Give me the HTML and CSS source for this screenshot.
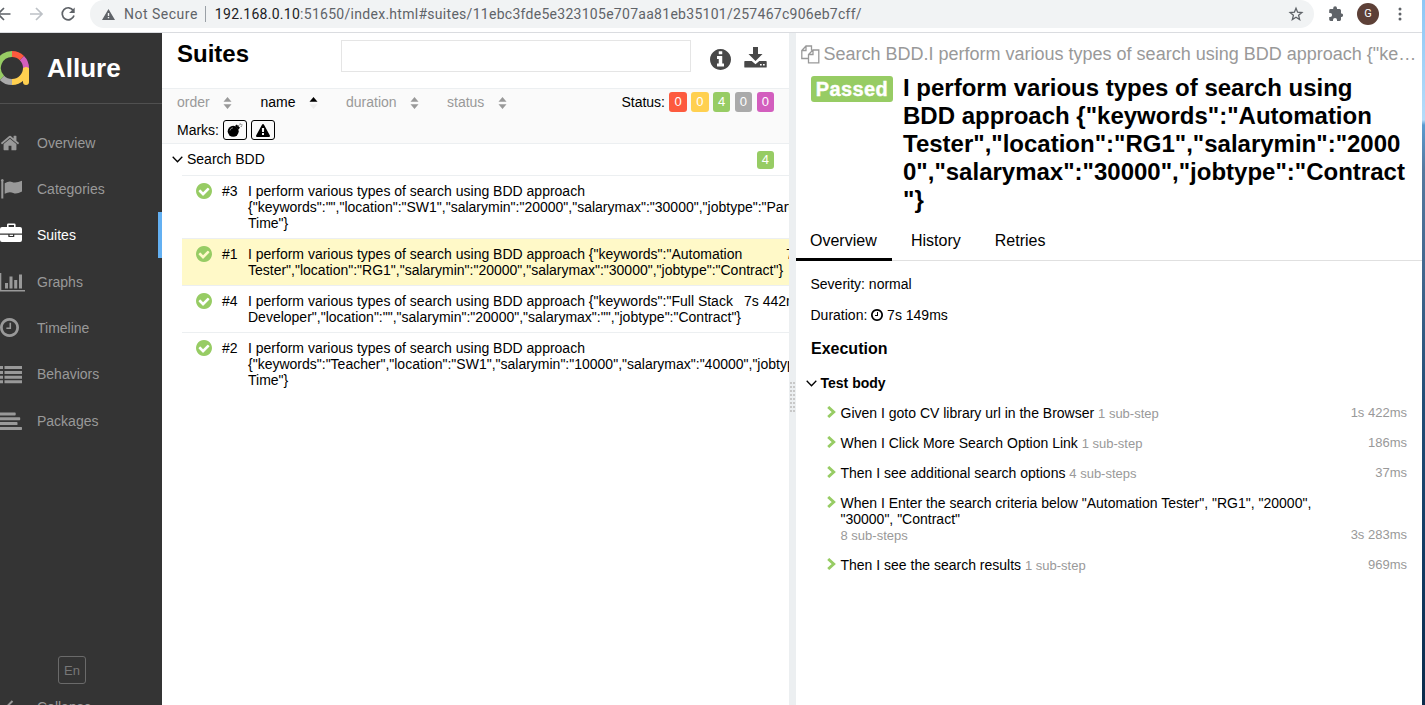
FILE: index.html
```html
<!DOCTYPE html>
<html lang="en">
<head>
<meta charset="utf-8">
<title>Allure Report</title>
<link rel="stylesheet" href="styles.css">
</head>
<body>
<svg width="0" height="0" class="defs">
  <symbol id="check" viewBox="128 128 1536 1536"><path d="M1412 734q0-28-18-46l-91-90q-19-19-45-19t-45 19l-408 407-226-226q-19-19-45-19t-45 19l-91 90q-18 18-18 46 0 27 18 45l362 362q19 19 45 19 27 0 46-19l543-543q18-18 18-45zm252 162q0 209-103 385.500t-279.500 279.500-385.500 103-385.500-103-279.500-279.500-103-385.500 103-385.500 279.500-279.500 385.500-103 385.500 103 279.500 279.500 103 385.500z"/></symbol>
  <symbol id="clock" viewBox="128 128 1536 1536"><path d="M1024 544v448q0 14-9 23t-23 9h-320q-14 0-23-9t-9-23v-64q0-14 9-23t23-9h224v-352q0-14 9-23t23-9h64q14 0 23 9t9 23zm416 352q0-148-73-273t-198-198-273-73-273 73-198 198-73 273 73 273 198 198 273 73 273-73 198-198 73-273zm224 0q0 209-103 385.500t-279.500 279.500-385.500 103-385.500-103-279.500-279.500-103-385.500 103-385.500 279.500-279.500 385.500-103 385.500 103 279.500 279.500 103 385.500z"/></symbol>
  <symbol id="sort" viewBox="0 0 8 12"><path d="M4 0 8 4.800H0zM0 7.200h8L4 12z"/></symbol>
  <symbol id="down" viewBox="0 0 11 7"><path d="M.700.700 5.500 5.700 10.300.700" fill="none" stroke="currentColor" stroke-width="1.300"/></symbol>
  <symbol id="right" viewBox="0 0 9 12"><path d="M1.200 1 6.700 6l-5.500 5" fill="none" stroke="currentColor" stroke-width="2.900"/></symbol>
</svg>
<div class="browser">
  <svg class="nav-icons" width="90" height="28" viewBox="0 0 90 28" fill="none" stroke-width="1.700">
    <path stroke="#5f6368" d="M-2 14H10.500M4 8l-6 6 6 6"/>
    <path stroke="#bdc1c6" d="M30 14H41.500M36 8l6 6-6 6"/>
    <path stroke="#5f6368" d="M73.300 10.500A6 6 0 1 0 74 15.500"/><path fill="#5f6368" d="M74.700 7.500v5.600h-5.600z"/>
  </svg>
  <div class="omnibox">
    <svg width="13" height="11" viewBox="0 0 13 11"><path fill="#5f6368" fill-rule="evenodd" d="M6.500 0 13 11H0zM5.800 4v3h1.400V4zm0 4v1.300h1.400V8z"/></svg>
    <span class="insecure">Not Secure</span><span class="bar"></span>
    <span class="url"><b>192.168.0.10</b>:51650/index.html#suites/11ebc3fde5e323105e707aa81eb35101/257467c906eb7cff/</span>
    <svg class="star" width="14" height="14" viewBox="0 0 14 14"><path fill="none" stroke="#5f6368" stroke-width="1.300" d="M7 1.200l1.600 4 4.300.3-3.300 2.800 1.050 4.200L7 10.200l-3.650 2.300L4.400 8.300 1.100 5.500l4.300-.3z"/></svg>
  </div>
  <svg class="puzzle" width="16" height="16" viewBox="0 0 16 16"><path fill="#5f6368" d="M13 7.500V4.500Q13 3 11.600 3H9V2.200a1.900 1.900 0 0 0-3.800 0V3H2.500Q1.200 3 1.200 4.400V7H2.100a2 2 0 0 1 0 4H1.200v2.600Q1.200 15 2.600 15H5v-.9a2 2 0 0 1 4 0v.9h2.600Q13 15 13 13.600V11h.7a1.800 1.800 0 0 0 0-3.500z"/></svg>
  <span class="avatar">G</span>
  <svg class="dots" width="4" height="14" viewBox="0 0 4 14" fill="#5f6368"><circle cx="2" cy="2" r="1.500"/><circle cx="2" cy="7" r="1.500"/><circle cx="2" cy="12" r="1.500"/></svg>
</div>
<div class="app">
  <nav class="side">
    <div class="brand">
      <svg width="30" height="36" viewBox="0 0 30 36" fill="none" stroke-width="6">
        <path stroke="#97cc64" d="M12 4A14 14 0 0 0 2 27.900"/>
        <path stroke="#fd5a3e" d="M12 4A14 14 0 0 1 21.900 8.100"/>
        <path stroke="#d35ebe" d="M21.900 8.100A14 14 0 0 1 26 18"/>
        <path stroke="#aaa" d="M2 27.900A14 14 0 0 0 12 32"/>
        <path stroke="#ffd050" d="M12 32A14 14 0 0 0 26 18"/><path stroke="#ffd050" stroke-linecap="round" d="M26 20V32"/><path stroke="#ffd050" d="M26 18v6"/>
      </svg><span>Allure</span>
    </div>
    <ul class="menu">
      <li><svg width="20" height="20" viewBox="0 0 1792 1792"><path d="M1472 992v480q0 26-19 45t-45 19h-384v-384h-256v384h-384q-26 0-45-19t-19-45v-480q0-1 .5-3t.5-3l575-474 575 474q1 2 1 6zm223-69l-62 74q-8 9-21 11h-3q-13 0-21-7l-692-577-692 577q-12 8-24 7-13-2-21-11l-62-74q-8-10-7-23.500t11-21.500l719-599q32-26 76-26t76 26l244 204v-195q0-14 9-23t23-9h192q14 0 23 9t9 23v408l219 182q10 8 11 21.500t-7 23.500z"/></svg>Overview</li>
      <li><svg width="23" height="20" viewBox="0 0 23 20"><path d="M1.300 2.500a1.400 1.400 0 1 1 2 0V19.500H1.300zM4.700 4.300Q9 1.600 12 2.900 15.500 4.500 22 1.800V12.400Q16.500 15.600 13.300 14 9.500 12 4.700 14.700z"/></svg>Categories</li>
      <li class="on"><svg width="23" height="20" viewBox="0 0 23 20"><path fill-rule="evenodd" d="M7 4V1.800Q7 .5 8.300.5h6Q15.600.5 15.600 1.800V4H20Q22 4 22 6v4.500H0V6Q0 4 2 4zM8.600 4h5.400V2H8.600zM0 11.700h8.300v1.700q0 .7.700.7h4.600q.7 0 .7-.7v-1.700H22v5.400q0 2-2 2H2q-2 0-2-2zM9.600 11.700h3.400v1.200H9.600z"/></svg>Suites</li>
      <li><svg width="26" height="20" viewBox="0 0 26 20"><path d="M0 1h1.300v17H25v1.500H0zM5 11h3v5.500H5zM9.500 4.500h3v12h-3zM14.200 8h3v8.500h-3zM19 2.500h3v14h-3z"/></svg>Graphs</li>
      <li><svg width="19" height="19"><use href="#clock"/></svg>Timeline</li>
      <li><svg width="23" height="20" viewBox="0 0 23 20"><path d="M0 2h3v3H0zM4.500 2H22v3H4.500zM0 7h3v3H0zM4.500 7H22v3H4.500zM0 11.700h3v3H0zM4.500 11.700H22v3H4.500zM0 16.300h3v3H0zM4.500 16.300H22v3H4.500z"/></svg>Behaviors</li>
      <li><svg width="23" height="20" viewBox="0 0 23 20"><path d="M0 1.500h15q.7 0 .7.700v1.600q0 .7-.7.700H0zM0 6.300h19.500q.7 0 .7.700v1.600q0 .7-.7.700H0zM0 11.100h16.800q.7 0 .7.700v1.600q0 .7-.7.700H0zM0 15.900h21.300q.7 0 .7.700v1.600q0 .7-.7.700H0z"/></svg>Packages</li>
    </ul>
    <div class="lang">En</div>
    <div class="collapse"><svg width="14" height="14" viewBox="0 0 14 14"><path d="M12.500 1 6.500 7l6 6" fill="none" stroke="#999" stroke-width="2"/></svg>Collapse</div>
  </nav>
  <section class="tree">
    <header>
      <h1>Suites</h1><div class="search"></div>
      <svg class="info" width="21" height="21" viewBox="128 128 1536 1536"><path d="M1152 1376v-160q0-14-9-23t-23-9h-96v-512q0-14-9-23t-23-9h-320q-14 0-23 9t-9 23v160q0 14 9 23t23 9h96v320h-96q-14 0-23 9t-9 23v160q0 14 9 23t23 9h448q14 0 23-9t9-23zm-128-896v-160q0-14-9-23t-23-9h-192q-14 0-23 9t-9 23v160q0 14 9 23t23 9h192q14 0 23-9t9-23zm640 416q0 209-103 385.500t-279.500 279.500-385.500 103-385.500-103-279.500-279.500-103-385.500 103-385.500 279.500-279.500 385.500-103 385.500 103 279.500 279.500 103 385.500z"/></svg>
      <svg class="save" width="23" height="21" viewBox="0 0 23 21"><path fill-rule="evenodd" d="M9 0h5v7h4.500l-7 7-7-7H9zM1 14h6.700l3.800 3.300 3.800-3.300H22q.7 0 .7.700v5.200q0 .7-.7.700H1q-.7 0-.7-.7v-5.200q0-.7.700-.7zM16 17v1.600h1.700V17zM19 17v1.600h1.700V17z"/></svg>
    </header>
    <div class="filters">
      <div class="sorts">
        <span class="s1">order<svg width="9" height="12"><use href="#sort"/></svg></span>
        <span class="s2">name<svg width="9" height="12" viewBox="0 0 8 12"><path d="M4 0 8 4.800H0z"/><path fill="#ccc" d="M0 7.200h8L4 12z" opacity=".25"/></svg></span>
        <span class="s3">duration<svg width="9" height="12"><use href="#sort"/></svg></span>
        <span class="s4">status<svg width="9" height="12"><use href="#sort"/></svg></span>
        <div class="status">Status:<i class="red">0</i><i class="yel">0</i><i class="grn">4</i><i class="gry">0</i><i class="pur">0</i></div>
      </div>
      <div class="marks">Marks:
        <span><svg width="16" height="14" viewBox="0 0 16 14"><circle cx="6.200" cy="8.300" r="5.500"/><path d="M8 3l1.700-1.600 3.300 3.300L11.400 6.500z"/><path d="M10.800 3.500l1.800-1.800M13.200.3v1.500M14 1.900h1.500M13.700 3l1 1" stroke="#555" stroke-width=".8"/><path d="M3 7.500Q3.500 5 6 4.800" stroke="#999" stroke-width=".8" fill="none"/></svg></span>
        <span><svg width="14" height="13" viewBox="0 0 1792 1664"><path d="M1024 1375v-190q0-14-9.500-23.500t-22.500-9.500h-192q-13 0-22.500 9.500t-9.500 23.500v190q0 14 9.500 23.500t22.500 9.500h192q13 0 22.500-9.500t9.500-23.500zm-2-374l18-459q0-12-10-19-13-11-24-11h-220q-11 0-24 11-10 7-10 21l17 457q0 10 10 16.500t24 6.500h185q14 0 23.500-6.500t10.500-16.500zm-14-934l768 1408q35 63-2 126-17 29-46.500 46t-63.500 17h-1536q-34 0-63.500-17t-46.500-46q-37-63-2-126l768-1408q17-31 47-49t65-18 65 18 47 49z"/></svg></span>
      </div>
    </div>
    <div class="group"><svg width="11" height="7"><use href="#down"/></svg><span>Search BDD</span><i class="grn">4</i></div>
    <div class="cases">
      <div class="case"><svg width="16" height="16"><use href="#check"/></svg><span class="num">#3</span><p>I perform various types of search using BDD approach<br>{"keywords":"","location":"SW1","salarymin":"20000","salarymax":"30000","jobtype":"Part<br>Time"}</p></div>
      <div class="case sel"><svg width="16" height="16"><use href="#check"/></svg><span class="num">#1</span><p>I perform various types of search using BDD approach {"keywords":"Automation<br>Tester","location":"RG1","salarymin":"20000","salarymax":"30000","jobtype":"Contract"}</p><span class="time t1">7s 149ms</span></div>
      <div class="case"><svg width="16" height="16"><use href="#check"/></svg><span class="num">#4</span><p>I perform various types of search using BDD approach {"keywords":"Full Stack<br>Developer","location":"","salarymin":"20000","salarymax":"","jobtype":"Contract"}</p><span class="time t4">7s 442ms</span></div>
      <div class="case"><svg width="16" height="16"><use href="#check"/></svg><span class="num">#2</span><p>I perform various types of search using BDD approach<br>{"keywords":"Teacher","location":"SW1","salarymin":"10000","salarymax":"40000","jobtype":"Part<br>Time"}</p></div>
    </div>
  </section>
  <div class="gutter"><span></span></div>
  <main>
    <div class="crumb"><svg width="19" height="19" viewBox="0 0 19 19" fill="none" stroke="#999" stroke-width="1.300"><path d="M7.500 13.500H.8V5.500L5 1h5.500v4.500M5 1v4.500H.8M7.500 17.800V9.500L12 5h5.800v12.800zM12 5v4.500H7.500"/></svg><span>Search BDD.I perform various types of search using BDD approach {"ke…</span></div>
    <div class="title"><span class="badge">Passed</span><h2>I perform various types of search using<br>BDD approach {"keywords":"Automation<br>Tester","location":"RG1","salarymin":"2000<br>0","salarymax":"30000","jobtype":"Contract<br>"}</h2></div>
    <div class="tabs"><span class="on">Overview</span><span>History</span><span>Retries</span></div>
    <p class="meta">Severity: normal</p>
    <p class="meta">Duration: <svg width="12" height="12"><use href="#clock"/></svg> 7s 149ms</p>
    <h3>Execution</h3>
    <h4><svg width="11" height="7"><use href="#down"/></svg>Test body</h4>
    <div class="steps">
      <div class="step"><svg width="9" height="12"><use href="#right"/></svg><p>Given I goto CV library url in the Browser <small>1 sub-step</small></p><em>1s 422ms</em></div>
      <div class="step"><svg width="9" height="12"><use href="#right"/></svg><p>When I Click More Search Option Link <small>1 sub-step</small></p><em>186ms</em></div>
      <div class="step"><svg width="9" height="12"><use href="#right"/></svg><p>Then I see additional search options <small>4 sub-steps</small></p><em>37ms</em></div>
      <div class="step"><svg width="9" height="12"><use href="#right"/></svg><p>When I Enter the search criteria below "Automation Tester", "RG1", "20000",<br>"30000", "Contract"<br><small>8 sub-steps</small></p><em>3s 283ms</em></div>
      <div class="step"><svg width="9" height="12"><use href="#right"/></svg><p>Then I see the search results <small>1 sub-step</small></p><em>969ms</em></div>
    </div>
  </main>
</div>
<div class="desktop"></div>
</body>
</html>
```
FILE: styles.css
```css
* { box-sizing: border-box; }
body { margin: 0; width: 1425px; height: 705px; overflow: hidden; display: grid; grid-template: 33px 672px / 1422px 3px; font: 14px/16px "Liberation Sans", Arial, sans-serif; color: #000; background: #fff; }
h1, h2, h3, h4, p, ul { margin: 0; padding: 0; }
i, em { font-style: normal; }
svg { flex: none; display: block; overflow: visible; }
.defs { position: absolute; }
.browser { display: flex; align-items: flex-start; border-bottom: 1px solid #dadce0; background: #fff; }
.omnibox { width: 1224px; height: 28px; background: #f1f3f4; border-radius: 14px; display: flex; align-items: center; padding: 0 11px 0 12px; font-family: Roboto, sans-serif; font-size: 14px; white-space: nowrap; color: #5f6368; }
.insecure { margin-left: 9px; letter-spacing: .5px; }
.bar { width: 1px; height: 16px; background: #9aa0a6; margin: 0 9px 0 7px; }
.url { letter-spacing: .28px; }
.url b { font-weight: 400; color: #202124; }
.star { margin-left: auto; }
.puzzle { margin: 6px 0 0 14px; }
.avatar { width: 22px; height: 22px; border-radius: 50%; background: #5d4037; color: #fff; font: 11px/22px Roboto, sans-serif; text-align: center; margin: 3px 0 0 13px; }
.dots { margin: 7px 0 0 19px; }
.desktop { grid-column: 2; grid-row: 1 / 3; background: linear-gradient(#8ec7f5 0, #b5dcfa 120px, #5b9bd0 125px, #55799f 170px, #40658c 280px, #234e77 400px, #123a62 560px, #0b2b4b 705px); }
.app { grid-column: 1; display: flex; height: 672px; overflow: hidden; }

.side { width: 162px; background: #343434; color: #999; display: flex; flex-direction: column; flex: none; overflow: hidden; }
.brand { height: 71px; border-bottom: 1px solid #505050; display: flex; align-items: center; flex: none; }
.brand svg { margin-right: 17px; }
.brand span { font-size: 26px; font-weight: 700; color: #fff; }
.menu { list-style: none; margin-top: 15.500px; flex: none; }
.menu li { height: 46.330px; display: grid; grid-template-columns: 37px 1fr; align-items: center; }
.menu svg { fill: #999; }
.menu .on { color: #fff; border-right: 4px solid #63b0f2; }
.menu .on svg { fill: #fff; margin-top: -4px; }
.lang { width: 28px; height: 28px; border: 1px solid #6a6a6a; border-radius: 3px; color: #777; text-align: center; line-height: 27px; font-size: 13px; margin: 212px 0 0 58px; flex: none; }
.collapse { display: flex; margin-top: 15px; flex: none; }
.collapse svg { margin-right: 23px; margin-top: 1px; }

.tree { width: 627px; flex: none; overflow: hidden; }
.tree header { height: 55px; display: flex; align-items: flex-start; padding: 7px 0 0 15px; fill: #484848; }
h1 { font-size: 24px; line-height: 28px; width: 164px; }
.search { width: 350px; height: 32px; border: 1px solid #e5e5e5; }
.info { margin: 9px 0 0 18.500px; }
.save { margin: 7px 0 0 13.500px; }
.filters { height: 56px; border: solid #eceff1; border-width: 1px 0; background: #fafafa; padding: 3px 15px 0; }
.sorts { display: flex; height: 20px; line-height: 20px; color: #999; }
.sorts span { display: flex; align-items: center; justify-content: space-between; fill: #999; }
.sorts svg { margin-top: 2px; }
.s1 { width: 55px; }
.sorts .s2 { width: 57px; margin-left: 28.500px; color: #000; fill: #000; }
.s3 { width: 73px; margin-left: 28.500px; }
.s4 { width: 60px; margin-left: 28px; }
.status { margin-left: auto; display: flex; color: #000; }
.red, .yel, .grn, .gry, .pur { width: 17.500px; height: 20px; border-radius: 3px; color: #fff; text-align: center; font-size: 13px; line-height: 20px; margin-left: 4.300px; }
.red { background: #fd5a3e; } .yel { background: #ffd050; } .grn { background: #97cc64; } .gry { background: #aaa; } .pur { background: #d35ebe; }
.marks { display: flex; align-items: center; height: 20px; margin-top: 8px; }
.marks span { width: 24px; height: 20px; border: 1px solid #000; border-radius: 3px; display: flex; align-items: center; justify-content: center; margin-left: 4px; }
.group { height: 31px; display: flex; align-items: center; padding: 0 15px 0 10px; }
.group span { margin: -1px 0 0 4px; flex: 1; }
.group .grn { height: 18px; line-height: 18px; margin-top: 1px; }
.cases { margin-left: 20px; }
.case { border-top: 1px solid #eceff1; padding: 7px 0 7px 14px; display: flex; fill: #97cc64; white-space: nowrap; position: relative; }
.case .num { width: 26px; flex: none; margin-left: 10px; }
.sel { background: #fff9c8; }
.time { position: absolute; top: 7px; }
.t1 { left: 604px; } .t4 { left: 562px; }

.gutter { width: 7px; flex: none; background: #eceff1; display: flex; align-items: center; justify-content: center; }
.gutter span { width: 5px; height: 30px; margin-top: 56px; background: repeating-linear-gradient(#eceff100 0 2px, #eceff1 2px 4px), repeating-linear-gradient(90deg, #c8c8c8 0 2px, #eceff1 2px 3px); }
main { flex: 1; min-width: 0; }
.crumb { display: flex; align-items: center; height: 42px; padding-left: 4.500px; font-size: 18px; color: #999; white-space: nowrap; }
.crumb span { margin-left: 4px; }
.title { display: flex; padding-left: 15px; }
.badge { background: #97cc64; color: #fff; width: 82px; height: 26px; border-radius: 3px; font-size: 20px; font-weight: 700; letter-spacing: .4px; line-height: 27px; text-align: center; margin-top: 1px; -webkit-text-stroke: .4px #fff; }
h2 { font-size: 24px; line-height: 28px; margin-left: 10px; white-space: nowrap; margin-top: -1px; }
.tabs { height: 47px; border-bottom: 1px solid #e0e0e0; display: flex; font-size: 16px; line-height: 19px; margin-bottom: 15px; }
.tabs span { padding: 17px 15px 0 14px; height: 47px; margin-right: 5px; }
.tabs .on { border-bottom: 3px solid #000; width: 96px; }
.meta { margin: 0 0 15px 14.500px; }
.meta svg { display: inline-block; vertical-align: -1px; }
h3 { font-size: 16px; line-height: 20px; margin: 16px 0 16px 15px; }
h4 { display: flex; align-items: center; padding-left: 9.500px; font-size: 14px; gap: 4px; }
.steps { margin-top: 7px; padding: 0 15px 0 31px; }
.step { display: flex; padding: 7px 0; color: #97cc64; align-items: flex-start; }
.step svg { margin-top: 1px; }
.step p { color: #000; margin-left: 4.500px; flex: 1; white-space: nowrap; }
.step small, .step em { font-size: 13px; color: #999; }
.step small { line-height: 12px; }
.step em { align-self: flex-end; }
```
